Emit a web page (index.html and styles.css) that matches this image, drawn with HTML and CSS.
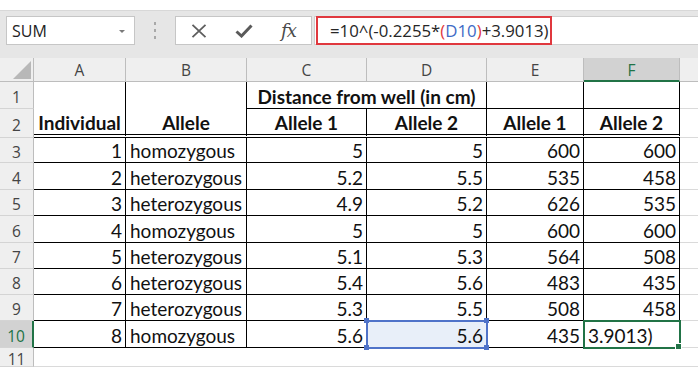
FILE: index.html
```html
<!DOCTYPE html>
<html>
<head>
<meta charset="utf-8">
<link rel="stylesheet" href="styles.css">
</head>
<body>
<div class="app">
  <div class="fbar">
    <div class="namebox"><span>SUM</span><span class="caret"></span></div>
    <div class="sep"><i></i><i></i><i></i></div>
    <div class="fxbox">
      <span class="slot"><svg width="16" height="14" viewBox="0 0 16 14"><path d="M1.5 0.8 L14.5 13.2 M14.5 0.8 L1.5 13.2" stroke="#5e5e5e" stroke-width="1.8" fill="none"/></svg></span>
      <span class="slot"><svg width="18" height="14" viewBox="0 0 18 14"><path d="M1.5 7.5 L6.5 12 L16.5 1.5" stroke="#5a5a5a" stroke-width="3" fill="none"/></svg></span>
      <span class="slot fx">fx</span>
    </div>
    <div class="formula">
      <div class="redbox">=10^(-0.2255*<span class="pr">(</span><span class="ref">D10</span><span class="pr">)</span>+3.9013)</div>
    </div>
  </div>
  <div class="sheet">
    <div class="corner"><span class="tri"></span></div>
    <div class="ch">A</div><div class="ch">B</div><div class="ch">C</div><div class="ch">D</div><div class="ch">E</div><div class="ch sel">F</div><div class="ch last"></div>

    <div class="rh">1</div>
    <div class="c t hd span2r">Individual</div>
    <div class="c t hd span2r">Allele</div>
    <div class="c t hd span2c">Distance from well (in cm)</div>
    <div class="c t"></div>
    <div class="c t"></div>
    <div class="c g"></div>

    <div class="rh">2</div>
    <div class="c t hd dbl">Allele 1</div>
    <div class="c t hd dbl">Allele 2</div>
    <div class="c t hd dbl">Allele 1</div>
    <div class="c t hd dbl">Allele 2</div>
    <div class="c g"></div>

    <div class="rh">3</div><div class="c t n">1</div><div class="c t">homozygous</div><div class="c t n">5</div><div class="c t n">5</div><div class="c t n">600</div><div class="c t n">600</div><div class="c g"></div>
    <div class="rh">4</div><div class="c t n">2</div><div class="c t">heterozygous</div><div class="c t n">5.2</div><div class="c t n">5.5</div><div class="c t n">535</div><div class="c t n">458</div><div class="c g"></div>
    <div class="rh">5</div><div class="c t n">3</div><div class="c t">heterozygous</div><div class="c t n">4.9</div><div class="c t n">5.2</div><div class="c t n">626</div><div class="c t n">535</div><div class="c g"></div>
    <div class="rh">6</div><div class="c t n">4</div><div class="c t">homozygous</div><div class="c t n">5</div><div class="c t n">5</div><div class="c t n">600</div><div class="c t n">600</div><div class="c g"></div>
    <div class="rh">7</div><div class="c t n">5</div><div class="c t">heterozygous</div><div class="c t n">5.1</div><div class="c t n">5.3</div><div class="c t n">564</div><div class="c t n">508</div><div class="c g"></div>
    <div class="rh">8</div><div class="c t n">6</div><div class="c t">heterozygous</div><div class="c t n">5.4</div><div class="c t n">5.6</div><div class="c t n">483</div><div class="c t n">435</div><div class="c g"></div>
    <div class="rh">9</div><div class="c t n">7</div><div class="c t">heterozygous</div><div class="c t n">5.3</div><div class="c t n">5.5</div><div class="c t n">508</div><div class="c t n">458</div><div class="c g"></div>
    <div class="rh sel">10</div><div class="c t n">8</div><div class="c t">homozygous</div><div class="c t n">5.6</div><div class="c t n refcell">5.6<i class="hd-tl"></i><i class="hd-tr"></i><i class="hd-bl"></i><i class="hd-br"></i></div><div class="c t n">435</div><div class="c t active">3.9013)</div><div class="c g"></div>

    <div class="rh">11</div><div class="c g"></div><div class="c g"></div><div class="c g"></div><div class="c g"></div><div class="c g"></div><div class="c g"></div><div class="c g"></div>
  </div>
</div>
</body>
</html>
```

FILE: styles.css
```css
* { box-sizing: border-box; }
body {
  margin: 0;
  background: #fff;
  font-family: "Open Sans", "Noto Sans", sans-serif;
}
.app {
  width: 698px;
  height: 367px;
  overflow: hidden;
  padding-top: 10px;
}
.fbar {
  height: 48px;
  background: #e6e6e6;
  border-top: 1px solid #d8d8d8;
  padding: 5px 0 0 6px;
  display: flex;
  align-items: flex-start;
}
.namebox {
  width: 129px;
  height: 29px;
  background: #fff;
  border: 1px solid #c6c6c6;
  display: flex;
  align-items: center;
  justify-content: space-between;
  padding: 0 9px 0 5px;
  font-size: 16px;
  color: #222;
}
.caret {
  width: 0;
  height: 0;
  border-left: 3px solid transparent;
  border-right: 3px solid transparent;
  border-top: 3px solid #7a7a7a;
  margin-top: 1px;
}
.sep {
  width: 40px;
  height: 29px;
  display: flex;
  flex-direction: column;
  align-items: center;
  justify-content: center;
  gap: 4px;
}
.sep i {
  display: block;
  width: 2px;
  height: 3px;
  background: #a8a8a8;
}
.fxbox {
  width: 137px;
  height: 29px;
  background: #fff;
  border: 1px solid #c6c6c6;
  display: flex;
  align-items: center;
}
.slot {
  flex: 1;
  display: flex;
  justify-content: center;
  align-items: center;
}
.slot svg { display: block; }
.fx {
  font-family: "DejaVu Serif", "Liberation Serif", serif;
  font-style: italic;
  font-size: 18px;
  color: #4a4a4a;
  letter-spacing: -1px;
}
.formula {
  flex: 1;
  height: 29px;
  margin-left: 2px;
  background: #fff;
  border: 1px solid #cfcfcf;
  border-right: none;
  padding-left: 1px;
  display: flex;
}
.redbox {
  width: 236px;
  height: 29px;
  margin-top: -1px;
  border: 2px solid #e0383e;
  padding-left: 12px;
  font-size: 16.8px;
  line-height: 25px;
  color: #262626;
  white-space: nowrap;
}
.pr { color: #e0383e; }
.ref { color: #3e6bc6; }

.sheet {
  display: grid;
  grid-template-columns: 34px 92px 121px 120px 120px 97px 96px 1fr;
  grid-template-rows: 24px 27px 29px 25px 27px 26px 27px 26px 26px 26px 27px 19px;
  font-family: "Lato", "Carlito", sans-serif;
  font-size: 19px;
  color: #111;
}
.corner {
  background: #efefef;
  border-right: 1px solid #bdbdbd;
  border-bottom: 1px solid #bdbdbd;
  display: flex;
  justify-content: flex-end;
  align-items: flex-end;
  padding: 0 2px 2px 0;
}
.tri {
  width: 0;
  height: 0;
  border-left: 18px solid transparent;
  border-bottom: 18px solid #b8b8b8;
}
.ch {
  background: #efefef;
  border-right: 1px solid #bdbdbd;
  border-bottom: 1px solid #bdbdbd;
  display: flex;
  align-items: center;
  justify-content: center;
  font-family: "Open Sans", "Noto Sans", sans-serif;
  font-size: 15.5px;
  color: #444;
  padding-top: 1px;
}
.ch.last { border-right: none; }
.ch.sel {
  background: #d2d2d2;
  color: #217346;
  border-bottom: 2px solid #217346;
}
.rh {
  background: #efefef;
  border-right: 1px solid #bdbdbd;
  border-bottom: 1px solid #d4d4d4;
  display: flex;
  align-items: center;
  justify-content: center;
  font-family: "Open Sans", "Noto Sans", sans-serif;
  font-size: 15.5px;
  color: #444;
  padding-top: 3px;
}
.rh.sel {
  background: #d2d2d2;
  color: #217346;
  border-right: 2px solid #217346;
}
.c {
  border-right: 1px solid #dadada;
  border-bottom: 1px solid #dadada;
  display: flex;
  align-items: flex-end;
  padding: 0 4px 2px 4px;
  line-height: 1;
  white-space: nowrap;
}
.c.t {
  border-right-color: #000;
  border-bottom-color: #000;
}
.c.g { border-right: none; }
.n { justify-content: flex-end; padding-right: 3px; }
.hd {
  font-weight: 700;
  justify-content: center;
}
.span2r { grid-row: span 2; border-bottom: 4px double #000; }
.span2c { grid-column: span 2; }
.dbl { border-bottom: 4px double #000; }

.refcell {
  position: relative;
  background: #e8eff9;
  outline: 2px solid #4f73c9;
  outline-offset: -1px;
  z-index: 1;
}
.refcell i {
  position: absolute;
  width: 5px;
  height: 5px;
  background: #4f73c9;
}
.hd-tl { left: -3px; top: -3px; }
.hd-tr { right: -3px; top: -3px; }
.hd-bl { left: -3px; bottom: -3px; }
.hd-br { right: -3px; bottom: -3px; }

.active {
  position: relative;
  outline: 2px solid #217346;
  outline-offset: -1px;
  z-index: 2;
}
.active::after {
  content: "";
  position: absolute;
  right: -3px;
  bottom: -3px;
  width: 5px;
  height: 5px;
  background: #217346;
  border: 1px solid #fff;
}
```
